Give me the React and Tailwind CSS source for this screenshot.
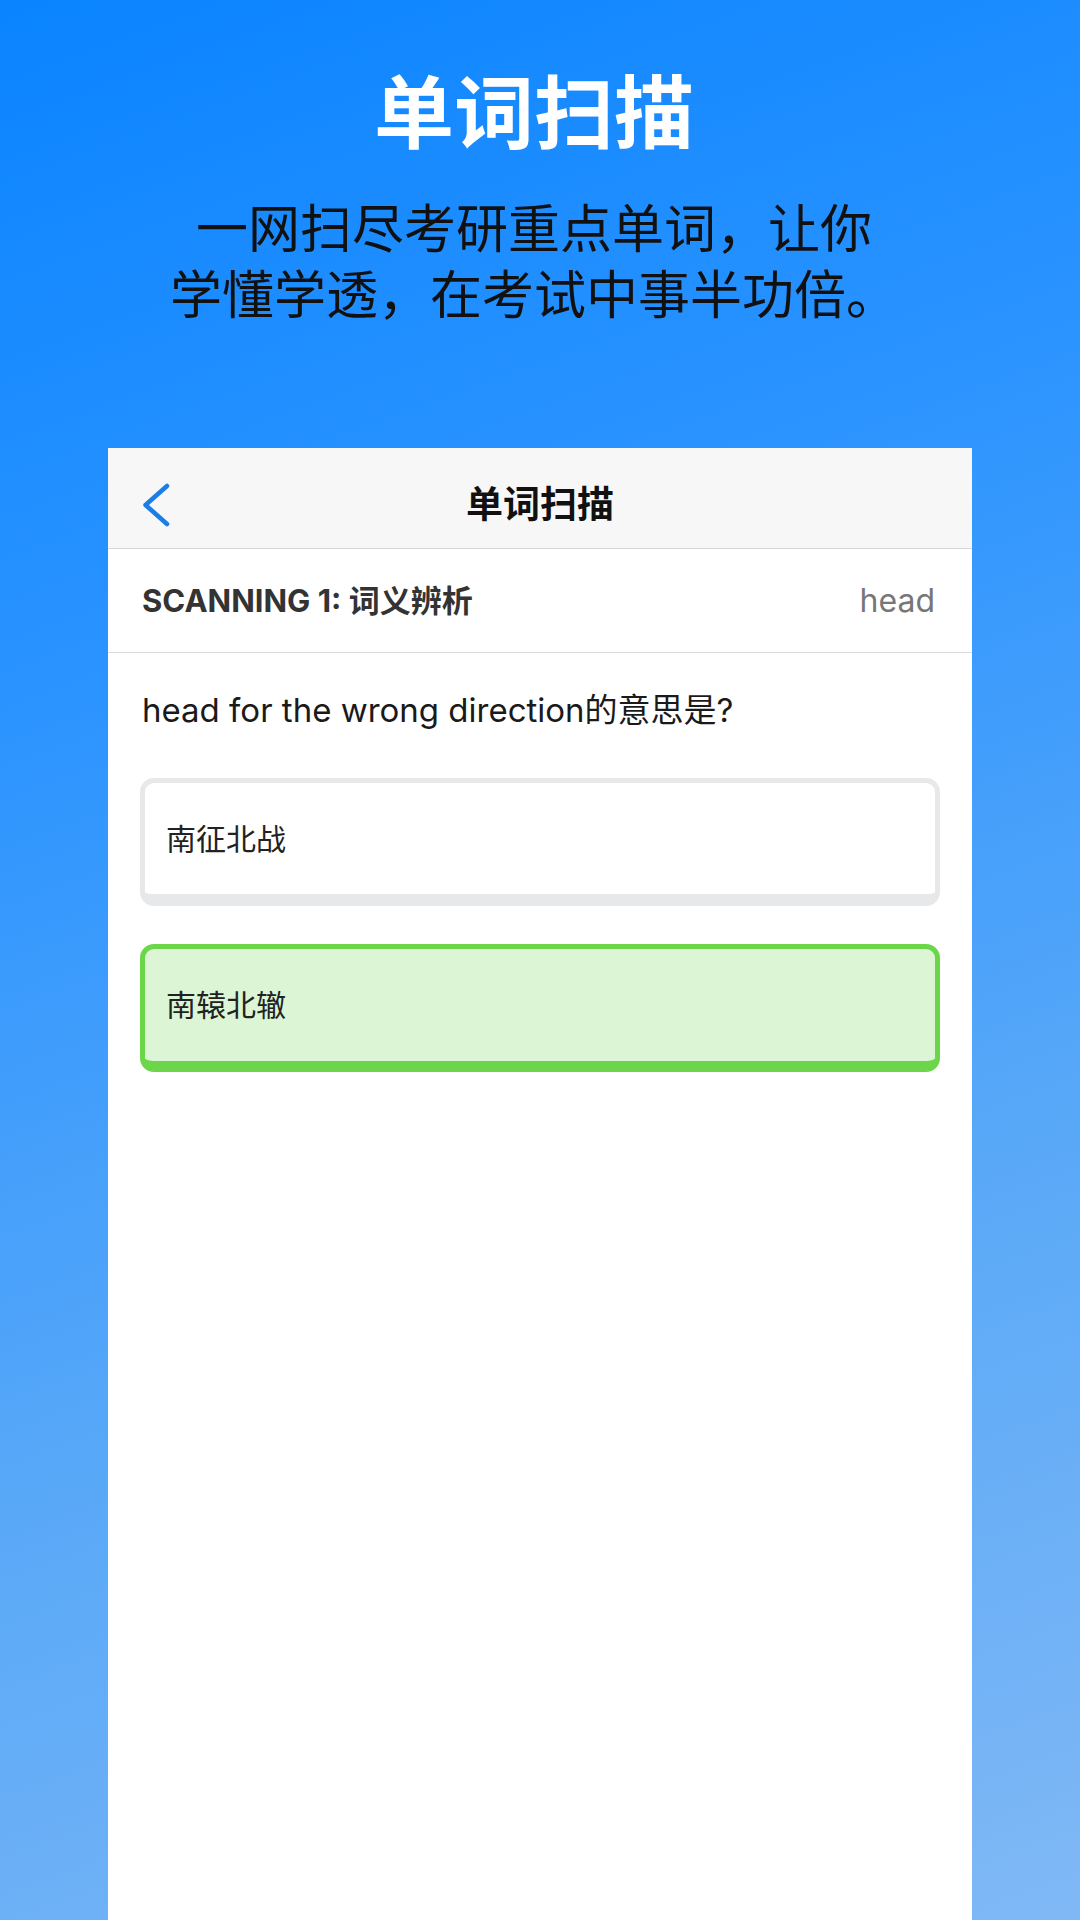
import React from "react";

const sans = { fontFamily: '"Inter", "Noto Sans CJK SC", sans-serif' };

function Option({ text, correct }) {
  return (
    <div
      className={
        correct
          ? "h-[128px] rounded-[14px] border-[5px] border-b-[11px] border-[#6cd64b] bg-[#dcf6d5] flex items-center pl-[21px]"
          : "h-[128px] rounded-[14px] border-[5px] border-b-[12px] border-[#e7e8e9] bg-white flex items-center pl-[21px]"
      }
    >
      <span className="text-[30px] leading-[40px] text-[#222]">{text}</span>
    </div>
  );
}

export default function App() {
  return (
    <div
      className="w-[1080px] h-[1920px] overflow-hidden flex flex-col items-center bg-[linear-gradient(160deg,#0a84ff_0%,#2a93ff_30%,#58a8f8_65%,#80b8f5_100%)]"
      style={sans}
    >
      <div className="w-full flex flex-col items-center pr-[12px]">
        <div className="pt-[73px] text-[80px] leading-[80px] font-bold text-white">
          单词扫描
        </div>
        <div className="mt-[44px] text-center text-[52px] leading-[66px] text-[#111]">
          一网扫尽考研重点单词，让你
          <br />
          学懂学透，在考试中事半功倍。
        </div>
      </div>

      <div className="mt-[119px] w-[864px] flex-1 bg-white flex flex-col">
        <div className="h-[101px] bg-[#f7f7f7] border-b border-[#d8d8d8] grid grid-cols-[120px_1fr_120px] items-center pt-[14px]">
          <div className="pl-[34px] flex items-center">
            <svg width="28" height="44" viewBox="0 0 28 44" fill="none">
              <path
                d="M25 3 L3.5 22 L25 41"
                stroke="#1a7ee6"
                strokeWidth="4.5"
                strokeLinecap="round"
                strokeLinejoin="round"
              />
            </svg>
          </div>
          <div className="text-center text-[37px] leading-[44px] font-semibold text-[#111]">
            单词扫描
          </div>
          <div />
        </div>

        <div className="h-[104px] border-b border-[#dcdcdc] flex items-center justify-between pl-[34px] pr-[37px]">
          <span className="text-[31px] leading-[40px] font-bold text-[#333]">
            SCANNING 1: 词义辨析
          </span>
          <span className="text-[32px] leading-[40px] text-[#777]">head</span>
        </div>

        <div className="pt-[37px] px-[34px] text-[33px] leading-[40px] text-[#1a1a1a]">
          head for the wrong direction的意思是?
        </div>

        <div className="mt-[48px] px-[32px] flex flex-col gap-[38px]">
          <Option text="南征北战" />
          <Option text="南辕北辙" correct />
        </div>
      </div>
    </div>
  );
}
